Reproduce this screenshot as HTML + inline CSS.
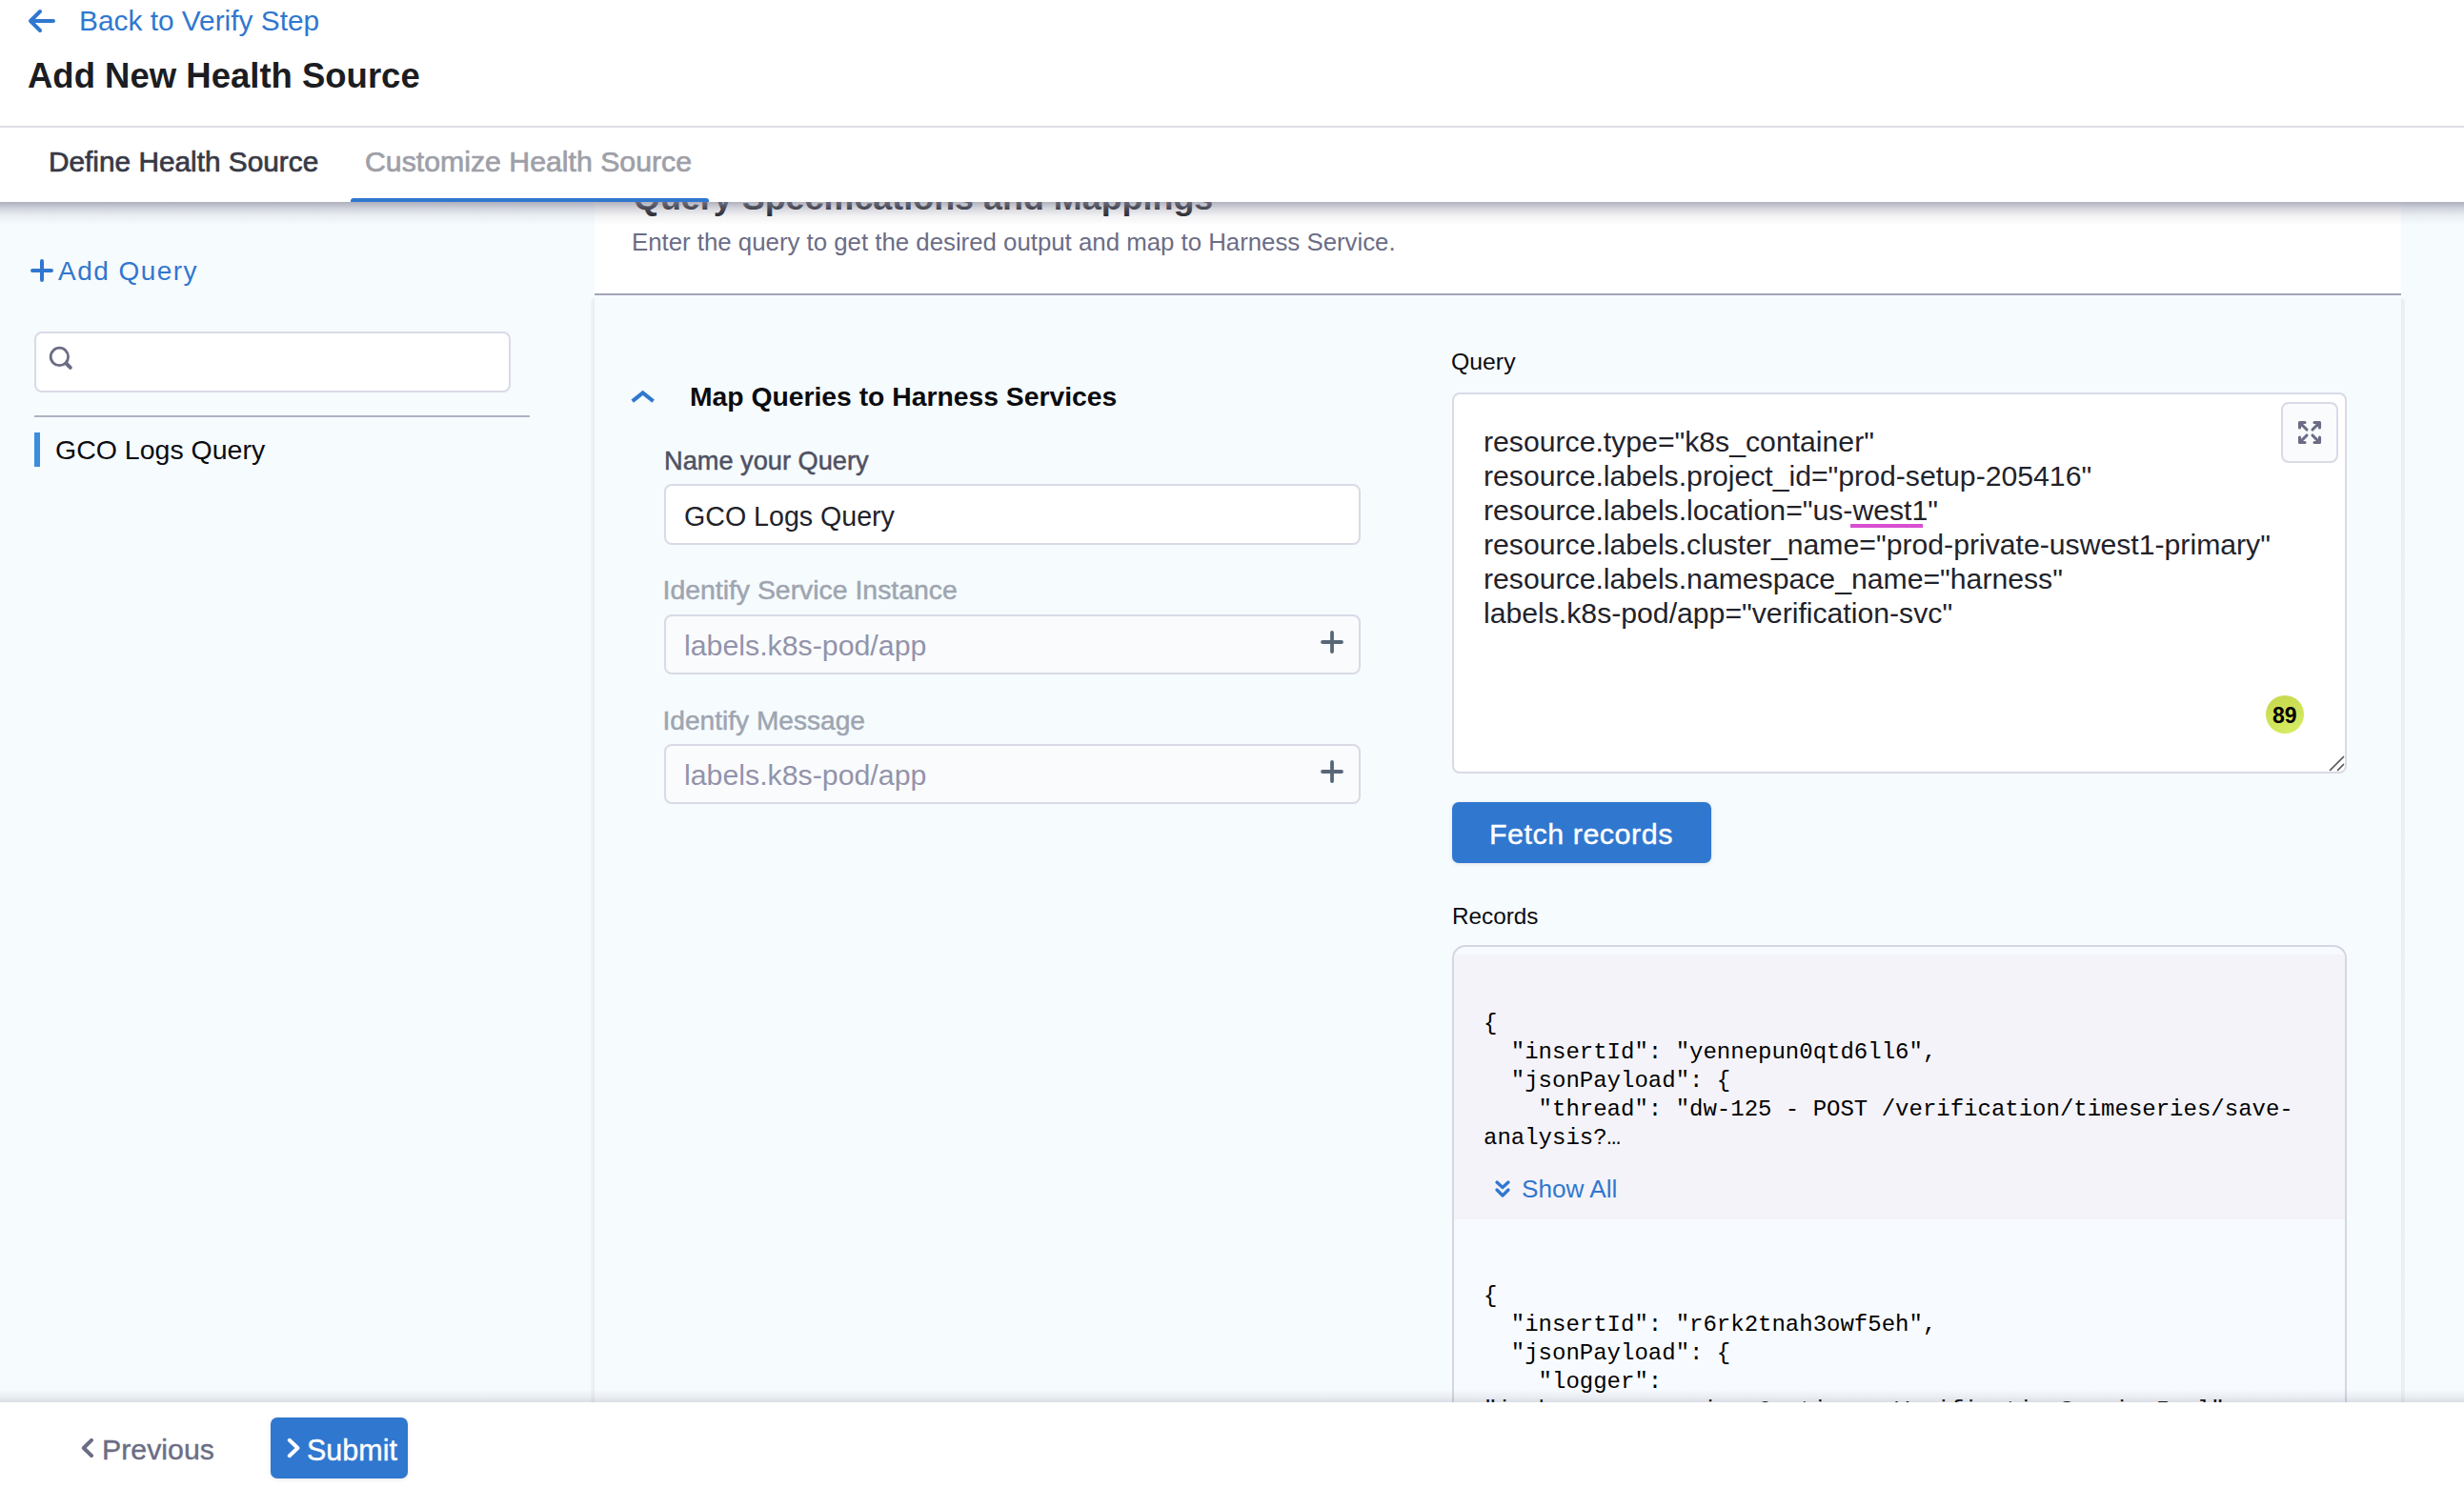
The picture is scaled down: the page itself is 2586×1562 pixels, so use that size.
<!DOCTYPE html>
<html>
<head>
<meta charset="utf-8">
<style>
html,body{margin:0;padding:0;}
body{width:2586px;height:1562px;overflow:hidden;position:relative;background:#ffffff;font-family:"Liberation Sans",sans-serif;color:#1c1d22;}
.abs{position:absolute;}
.t{position:absolute;white-space:pre;line-height:1;}
svg{position:absolute;overflow:visible;}
/* regions */
#header{left:0;top:0;width:2586px;height:212px;background:#fff;z-index:10;}
#left{left:0;top:212px;width:624px;height:1260px;background:#f6fbfe;}
#rightstrip{left:2520px;top:212px;width:66px;height:1260px;background:#f6fbfe;}
#mainhead{left:624px;top:212px;width:1896px;height:98px;background:#fff;}
#card{left:624px;top:310px;width:1896px;height:1200px;background:#f6fbfe;}
#footer{left:0;top:1472px;width:2586px;height:90px;background:#fff;z-index:10;}
.input{position:absolute;box-sizing:border-box;border:2px solid #d9dae6;border-radius:8px;background:#fff;}
</style>
</head>
<body>

<!-- ============ HEADER ============ -->
<div id="header" class="abs">
  <svg style="left:0;top:0" width="80" height="45" viewBox="0 0 80 45">
    <path d="M56 22 H32 M42 12 L32 22 L42 32" fill="none" stroke="#3077cf" stroke-width="4" stroke-linecap="round" stroke-linejoin="round"/>
  </svg>
  <div class="t" style="left:83px;top:7px;font-size:29.85px;color:#3077cf;">Back to Verify Step</div>
  <div class="t" style="left:29px;top:62px;font-size:36.5px;font-weight:bold;color:#1c1d22;">Add New Health Source</div>
  <div class="abs" style="left:0;top:132px;width:2586px;height:2px;background:#dcdde6;"></div>
  <div class="t" style="left:51px;top:155px;font-size:29.8px;color:#383946;-webkit-text-stroke:0.7px #383946;">Define Health Source</div>
  <div class="t" style="left:383px;top:155px;font-size:30.25px;color:#9e9fa8;-webkit-text-stroke:0.7px #9e9fa8;">Customize Health Source</div>
  <div class="abs" style="left:368px;top:208px;width:376px;height:4px;background:#3077cf;border-radius:3px 3px 0 0;"></div>
</div>

<div class="abs" style="left:0;top:212px;width:2586px;height:24px;z-index:9;background:linear-gradient(to bottom,rgba(140,141,160,0.68) 0%,rgba(140,141,160,0.35) 30%,rgba(140,141,160,0.12) 60%,rgba(140,141,160,0) 100%);"></div>
<!-- ============ LEFT PANEL ============ -->
<div id="left" class="abs">
  <svg style="left:0;top:0" width="624" height="300">
    <path d="M44 62 V82 M34 72 H54" fill="none" stroke="#3077cf" stroke-width="4" stroke-linecap="round"/>
  </svg>
  <div class="t" style="left:61px;top:59px;font-size:28px;letter-spacing:1.45px;color:#3077cf;">Add Query</div>
  <div class="input" style="left:36px;top:136px;width:500px;height:64px;"></div>
  <svg style="left:0;top:0" width="624" height="300">
    <circle cx="62.4" cy="162.4" r="9.2" fill="none" stroke="#6b6d85" stroke-width="2.8"/>
    <path d="M69.5 169.5 L73.8 173.8" fill="none" stroke="#6b6d85" stroke-width="4" stroke-linecap="round"/>
  </svg>
  <div class="abs" style="left:36px;top:224px;width:520px;height:2px;background:#b0b1c3;"></div>
  <div class="abs" style="left:36px;top:242px;width:6px;height:36px;background:#3d8ddd;"></div>
  <div class="t" style="left:58px;top:246px;font-size:28.5px;color:#0b0b0e;">GCO Logs Query</div>
</div>
<div id="rightstrip" class="abs"></div>

<!-- ============ MAIN HEADER ============ -->
<div id="mainhead" class="abs">
  <div class="t" style="left:41px;top:-21px;font-size:35.9px;font-weight:bold;color:#22222a;">Query Specifications and Mappings</div>
  <div class="t" style="left:39px;top:30px;font-size:25.8px;color:#6b6d85;">Enter the query to get the desired output and map to Harness Service.</div>
  <div class="abs" style="left:0;top:96px;width:1896px;height:2px;background:#a3a5b8;"></div>
</div>

<!-- ============ CARD ============ -->
<div class="abs" style="left:620px;top:313px;width:4px;height:1160px;background:linear-gradient(to right,#f1f4f8,#e9ecf1);border-radius:4px 0 0 0;"></div>
<div class="abs" style="left:2520px;top:313px;width:4px;height:1160px;background:linear-gradient(to right,#e9ecf1,#eff2f6);border-radius:0 4px 0 0;"></div>
<div id="card" class="abs">
  <!-- left column: coordinates relative to card (624,310) -->
  <svg style="left:0;top:0" width="800" height="600">
    <path d="M39.7 111.1 L50.65 102.4 L61.6 111.1" fill="none" stroke="#3077cf" stroke-width="4" stroke-linecap="butt" stroke-linejoin="miter"/>
  </svg>
  <div class="t" style="left:100px;top:92px;font-size:28.3px;font-weight:bold;color:#0b0b0e;">Map Queries to Harness Services</div>
  <div class="t" style="left:73px;top:160px;font-size:27.2px;color:#4f5162;-webkit-text-stroke:0.5px #4f5162;">Name your Query</div>
  <div class="input" style="left:73px;top:198px;width:731px;height:64px;"></div>
  <div class="t" style="left:94px;top:218px;font-size:28.6px;color:#22222a;">GCO Logs Query</div>
  <div class="t" style="left:71.5px;top:295px;font-size:28.4px;color:#9ea5b0;-webkit-text-stroke:0.5px #9ea5b0;">Identify Service Instance</div>
  <div class="input" style="left:73px;top:335px;width:731px;height:63px;background:#fafbfc;"></div>
  <div class="t" style="left:94px;top:353px;font-size:30.3px;color:#9293ab;">labels.k8s-pod/app</div>
  <div class="t" style="left:71.5px;top:433px;font-size:28.1px;color:#9ea5b0;-webkit-text-stroke:0.5px #9ea5b0;">Identify Message</div>
  <div class="input" style="left:73px;top:471px;width:731px;height:63px;background:#fafbfc;"></div>
  <div class="t" style="left:94px;top:489px;font-size:30.3px;color:#9293ab;">labels.k8s-pod/app</div>
  <svg style="left:0;top:0" width="900" height="600">
    <path d="M774 354 V374 M764 364 H784" fill="none" stroke="#586778" stroke-width="3.8" stroke-linecap="round"/>
    <path d="M774 490 V510 M764 500 H784" fill="none" stroke="#586778" stroke-width="3.8" stroke-linecap="round"/>
  </svg>

  <!-- right column -->
  <div class="t" style="left:899px;top:58px;font-size:24.8px;color:#0b0b0e;">Query</div>
  <div class="input" style="left:900px;top:102px;width:939px;height:400px;"></div>
  <div class="abs" style="left:933px;top:136px;font-size:30.2px;line-height:36px;white-space:pre;color:#22222a;">resource.type="k8s_container"
resource.labels.project_id="prod-setup-205416"
resource.labels.location="us-west1"
resource.labels.cluster_name="prod-private-uswest1-primary"
resource.labels.namespace_name="harness"
labels.k8s-pod/app="verification-svc"</div>
  <div class="abs" style="left:1318px;top:240px;width:76px;height:4px;border-radius:0;background:#d94fd2;"></div>
  <div class="input" style="left:1770px;top:112px;width:60px;height:64px;background:#fafbfc;"></div>
  <svg style="left:0;top:0" width="1900" height="600">
    <g fill="none" stroke="#6b6d85" stroke-width="3.1" stroke-linecap="round" stroke-linejoin="round">
      <path d="M1789.5 139 V133.5 H1795 M1790 134 L1797 141"/>
      <path d="M1805 133.5 H1810.5 V139 M1810 134 L1803 141"/>
      <path d="M1789.5 149 V154.5 H1795 M1790 154 L1797 147"/>
      <path d="M1810.5 149 V154.5 H1805 M1810 154 L1803 147"/>
    </g>
  </svg>
  <div class="abs" style="left:1754px;top:420px;width:40px;height:40px;border-radius:50%;background:linear-gradient(160deg,#c6d64c,#d8ee64);"></div>
  <div class="t" style="left:1761px;top:430px;font-size:23px;font-weight:bold;color:#000;">89</div>
  <svg style="left:0;top:0" width="1900" height="600">
    <path d="M1821.5 498.5 L1835.5 484.5 M1829.5 498.5 L1835.5 492.5" fill="none" stroke="#555" stroke-width="1.7" stroke-linecap="round"/>
  </svg>

  <div class="abs" style="left:900px;top:532px;width:272px;height:64px;border-radius:7px;background:#3077cf;box-shadow:0 0 2px rgba(40,41,61,0.06),0 1px 4px rgba(96,97,112,0.14);"></div>
  <div class="t" style="left:939px;top:550px;font-size:30.4px;color:#fff;letter-spacing:0.55px;-webkit-text-stroke:0.4px #fff;">Fetch records</div>
  <div class="t" style="left:900px;top:640px;font-size:24.3px;color:#0b0b0e;">Records</div>

  <div class="abs" style="left:900px;top:682px;width:939px;height:900px;box-sizing:border-box;border:2px solid #d5d6e1;border-radius:14px;background:#f7fafe;overflow:hidden;">
    <div class="abs" style="left:0;top:8px;width:935px;height:278px;background:#f4f3f9;"></div>
    <div class="abs" style="left:31px;top:66px;font-family:'Liberation Mono',monospace;font-size:24px;line-height:30px;white-space:pre;color:#000;">{
  "insertId": "yennepun0qtd6ll6",
  "jsonPayload": {
    "thread": "dw-125 - POST /verification/timeseries/save-
analysis?…</div>
    <svg style="left:0;top:0" width="200" height="300">
      <path d="M45 247 L51 252.5 L57 247 M45 255 L51 261 L57 255" fill="none" stroke="#3077cf" stroke-width="3.3" stroke-linecap="round" stroke-linejoin="round"/>
    </svg>
    <div class="t" style="left:71px;top:241px;font-size:26.15px;color:#3077cf;">Show All</div>
    <div class="abs" style="left:31px;top:352px;font-family:'Liberation Mono',monospace;font-size:24px;line-height:30px;white-space:pre;color:#000;">{
  "insertId": "r6rk2tnah3owf5eh",
  "jsonPayload": {
    "logger":
"io.harness.service.ContinuousVerificationServiceImpl",</div>
  </div>
</div>

<!-- ============ FOOTER ============ -->
<div class="abs" style="left:0;top:1458px;width:2586px;height:14px;z-index:9;background:linear-gradient(to bottom,rgba(120,122,140,0) 0%,rgba(120,122,140,0.10) 60%,rgba(120,122,140,0.22) 100%);"></div>
<div id="footer" class="abs">
  <svg style="left:0;top:0" width="500" height="90">
    <path d="M96 39.8 L87.8 48 L96 56" fill="none" stroke="#6b6d85" stroke-width="4" stroke-linecap="round" stroke-linejoin="round"/>
  </svg>
  <div class="t" style="left:107px;top:35px;font-size:30.3px;color:#6b6d85;-webkit-text-stroke:0.4px #6b6d85;">Previous</div>
  <div class="abs" style="left:284px;top:16px;width:144px;height:64px;border-radius:7px;background:#3077cf;box-shadow:0 0 2px rgba(40,41,61,0.06),0 1px 4px rgba(96,97,112,0.14);"></div>
  <svg style="left:0;top:0" width="500" height="90">
    <path d="M303.8 39.8 L312.4 48 L303.8 56.2" fill="none" stroke="#fff" stroke-width="4" stroke-linecap="round" stroke-linejoin="round"/>
  </svg>
  <div class="t" style="left:322px;top:35px;font-size:30.5px;color:#fff;-webkit-text-stroke:0.4px #fff;">Submit</div>
</div>

</body>
</html>
